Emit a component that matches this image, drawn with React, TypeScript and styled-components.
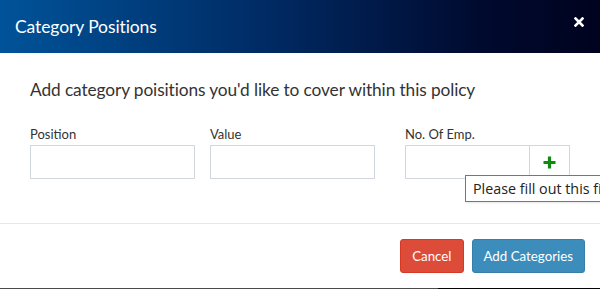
import React from "react";
import styled, { createGlobalStyle } from "styled-components";

const GlobalStyle = createGlobalStyle`
  html, body {
    margin: 0;
    padding: 0;
    background: #fff;
  }
  body {
    font-family: Lato, "Liberation Sans", sans-serif;
    color: #333;
    overflow: hidden;
  }
  * {
    box-sizing: border-box;
  }
`;

const Modal = styled.div`
  width: 600px;
  height: 289px;
  display: flex;
  flex-direction: column;
  background: #fff;
  overflow: hidden;
  position: relative;
`;

const Header = styled.div`
  height: 53px;
  flex-shrink: 0;
  display: flex;
  align-items: center;
  justify-content: space-between;
  padding: 0 16px 0 15px;
  background: linear-gradient(to right, #005399 0%, #002a63 45%, #000a2f 80%, #00031f 100%);
  color: #fff;
`;

const Title = styled.h4`
  margin: 0;
  font-size: 17.5px;
  font-weight: 400;
  letter-spacing: -0.1px;
`;

const Close = styled.button`
  border: none;
  background: none;
  padding: 0;
  width: 10px;
  height: 10px;
  margin-top: -9px;
  display: flex;
  cursor: pointer;
`;

const Body = styled.div`
  padding: 24px 30px 44px;
  border-bottom: 1px solid #e8e8e8;
`;

const Lead = styled.p`
  margin: 0 0 22px;
  font-size: 17.3px;
  line-height: 26px;
  color: #333;
  letter-spacing: -0.1px;
`;

const Fields = styled.div`
  display: flex;
`;

const Field = styled.div<{ gap?: number }>`
  width: 165px;
  margin-right: ${(p) => p.gap ?? 0}px;
  display: flex;
  flex-direction: column;
`;

const Label = styled.label`
  font-size: 13px;
  line-height: 18px;
  margin-bottom: 2px;
  color: #333;
`;

const InputGroup = styled.div`
  display: flex;
  position: relative;
`;

const Input = styled.input`
  flex: 1;
  min-width: 0;
  height: 34px;
  border: 1px solid #d2d6de;
  border-radius: 0;
  padding: 6px 12px;
  font-size: 14px;
  outline: none;
  background: #fff;
`;

const AddOn = styled.span`
  width: 40px;
  height: 34px;
  border: 1px solid #d2d6de;
  border-left: none;
  display: flex;
  align-items: center;
  justify-content: center;
  background: #fff;
`;

const Tooltip = styled.div`
  position: absolute;
  left: 60px;
  top: 30px;
  height: 27px;
  padding: 0 7px;
  display: flex;
  align-items: center;
  border: 1px solid #767676;
  background: #fff;
  color: #222;
  font-family: "Open Sans", "Noto Sans", sans-serif;
  font-size: 14.3px;
  white-space: nowrap;
  box-shadow: 1px 1px 2px rgba(0, 0, 0, 0.1);
`;

const Footer = styled.div`
  flex: 1;
  display: flex;
  justify-content: flex-end;
  align-items: flex-start;
  gap: 8px;
  padding: 15px 15px 0 15px;
`;

const Button = styled.button<{ variant: "danger" | "primary" }>`
  height: 34px;
  padding: 0 11px;
  border-radius: 3px;
  font-family: Lato, "Liberation Sans", sans-serif;
  font-size: 13.3px;
  color: #fff;
  cursor: pointer;
  border: 1px solid ${(p) => (p.variant === "danger" ? "#d73925" : "#367fa9")};
  background: ${(p) => (p.variant === "danger" ? "#dd4b39" : "#3c8dbc")};
`;

const BottomEdge = styled.div`
  height: 1px;
  flex-shrink: 0;
  background: linear-gradient(to right, #4a4a4a 0, #4a4a4a 438px, #050505 438px);
`;

export default function App() {
  return (
    <>
      <GlobalStyle />
      <Modal>
        <Header>
          <Title>Category Positions</Title>
          <Close aria-label="Close">
            <svg width="10" height="10" viewBox="0 0 10 10">
              <path d="M1.5 1.5 L8.5 8.5 M8.5 1.5 L1.5 8.5" stroke="#fff" strokeWidth="2.6" strokeLinecap="square" />
            </svg>
          </Close>
        </Header>
        <Body>
          <Lead>Add category poisitions you'd like to cover within this policy</Lead>
          <Fields>
            <Field gap={15}>
              <Label>Position</Label>
              <InputGroup>
                <Input type="text" />
              </InputGroup>
            </Field>
            <Field gap={30}>
              <Label>Value</Label>
              <InputGroup>
                <Input type="text" />
              </InputGroup>
            </Field>
            <Field>
              <Label>No. Of Emp.</Label>
              <InputGroup>
                <Input type="text" />
                <AddOn>
                  <svg width="13" height="13" viewBox="0 0 13 13">
                    <path d="M6.5 0.5 V12.5 M0.5 6.5 H12.5" stroke="#118a11" strokeWidth="3.2" />
                  </svg>
                </AddOn>
                <Tooltip>Please fill out this field.</Tooltip>
              </InputGroup>
            </Field>
          </Fields>
        </Body>
        <Footer>
          <Button variant="danger">Cancel</Button>
          <Button variant="primary">Add Categories</Button>
        </Footer>
        <BottomEdge />
      </Modal>
    </>
  );
}
